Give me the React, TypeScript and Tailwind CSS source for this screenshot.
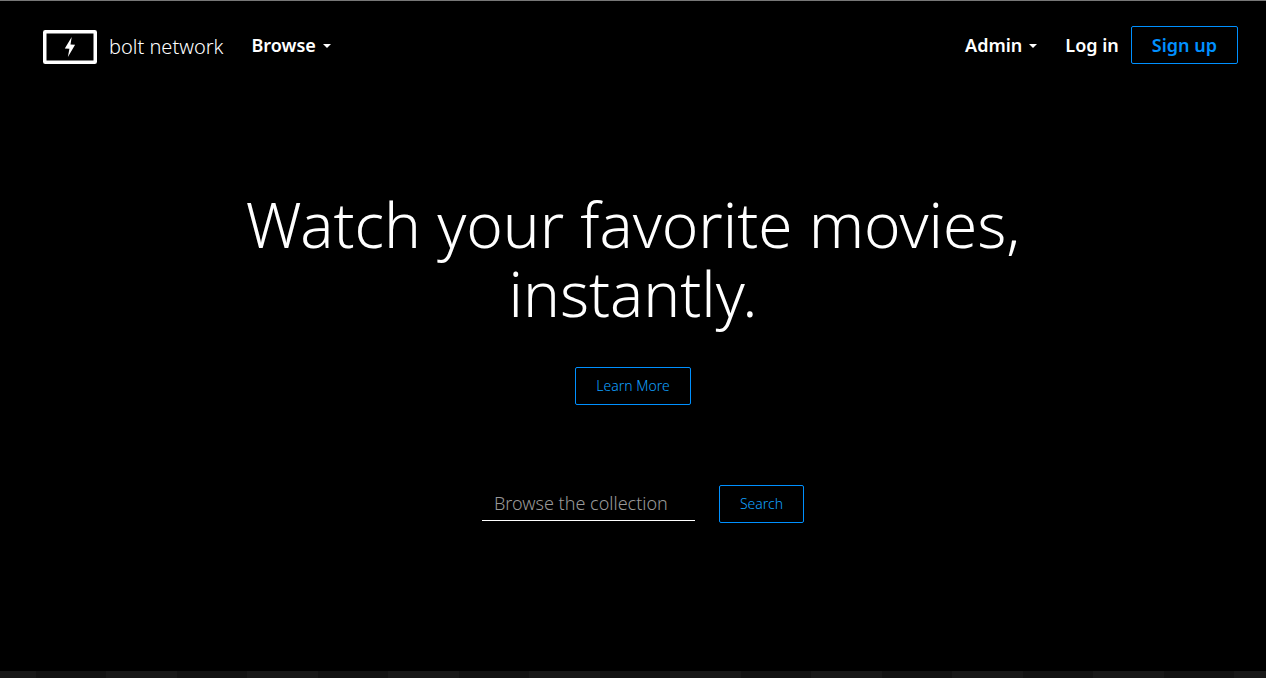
import React from "react";

function Caret() {
  return (
    <svg width="8" height="4" viewBox="0 0 8 4" className="mt-0.5" aria-hidden="true">
      <path d="M0 0h8L4 4z" fill="currentColor" />
    </svg>
  );
}

function Logo() {
  return (
    <svg width="54" height="34" viewBox="0 0 54 34" aria-hidden="true">
      <rect x="1.75" y="1.75" width="50.5" height="30.5" rx="0.5" fill="none" stroke="#fff" strokeWidth="3.5" strokeLinejoin="round" />
      <path d="M28.7 7 21.8 18.6l4.6.2L24.9 27l7.2-12.2-4.6-.3z" fill="#fff" />
    </svg>
  );
}

const outline =
  "flex h-[38px] items-center rounded-[2px] border border-[#0090ff] px-5";

export default function App() {
  return (
    <div className="flex min-h-screen flex-col border-t border-[#777] bg-black font-['Noto_Sans','Open_Sans',sans-serif] text-white">
      <header className="flex items-center justify-between pt-[25px] pr-7 pl-[43px]">
        <div className="flex items-center">
          <a href="#home" className="flex items-end gap-3 pt-1 text-xl leading-[34px] font-light">
            <Logo />
            <span>bolt network</span>
          </a>
          <button type="button" className="ml-7 flex items-center gap-[7px] text-lg font-semibold">
            Browse
            <Caret />
          </button>
        </div>
        <nav className="flex items-center text-lg font-semibold">
          <button type="button" className="flex items-center gap-[7px]">
            Admin
            <Caret />
          </button>
          <a href="#login" className="ml-7">Log in</a>
          <a href="#signup" className={`${outline} ml-3 text-[#0090ff]`}>Sign up</a>
        </nav>
      </header>

      <main className="flex flex-1 flex-col items-center pt-[126px]">
        <h1 className="max-w-[860px] text-center text-[62px] leading-[69px] font-light">
          Watch your favorite movies, instantly.
        </h1>
        <a href="#more" className={`${outline} mt-[39px] text-sm font-light text-[#10a0ff]`}>Learn More</a>
        <form className="mt-20 flex items-start gap-6 pl-5">
          <input
            type="search"
            aria-label="Browse the collection"
            placeholder="Browse the collection"
            className="h-9 w-[213px] border-b border-white bg-transparent px-3 text-lg font-light outline-none placeholder:text-[#999]"
          />
          <button type="submit" className={`${outline} text-sm font-light text-[#10a0ff]`}>Search</button>
        </form>
      </main>
      <div className="h-[7px] bg-[repeating-linear-gradient(90deg,#181818_0px_36px,#121212_36px_106px,#181818_106px_141px)]" />
    </div>
  );
}
